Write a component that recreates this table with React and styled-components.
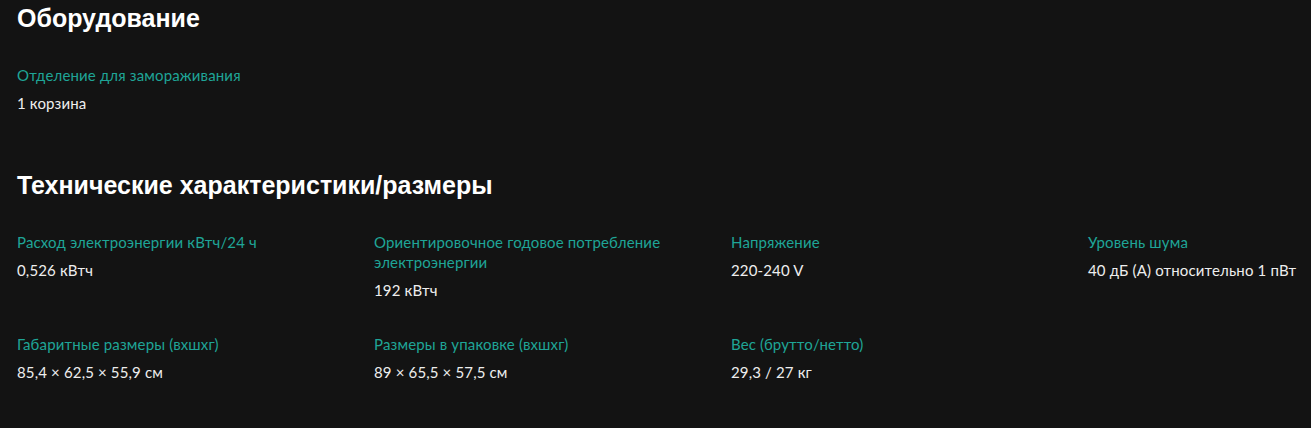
import styled, { createGlobalStyle } from "styled-components";

const GlobalStyle = createGlobalStyle`
  html, body {
    margin: 0;
    padding: 0;
    background: #131313;
    overflow: hidden;
  }
`;

const Page = styled.div`
  padding: 4px 0 20px 17px;
  color: #f2f2f2;
  font-family: "Lato", "Noto Sans", sans-serif;
`;

const Heading = styled.h2`
  margin: 0;
  font-family: "Liberation Sans", Arial, sans-serif;
  font-weight: 700;
  font-size: 25px;
  line-height: 29px;
  color: #ffffff;
`;

const Section = styled.section`
  margin-bottom: ${p => p.$gap || 0}px;
`;

const Grid = styled.div`
  display: grid;
  grid-template-columns: repeat(3, 337px) 1fr;
  column-gap: 20px;
  row-gap: 32px;
  margin-top: 32px;
`;

const Item = styled.div``;

const Label = styled.div`
  font-size: 15px;
  letter-spacing: 0.15px;
  line-height: 20px;
  color: #1fa597;
`;

const Value = styled.div`
  margin-top: 6px;
  font-size: 15px;
  letter-spacing: 0.15px;
  line-height: 24px;
  white-space: nowrap;
  color: #eeeeee;
`;

const equipment = [{ label: "Отделение для замораживания", value: "1 корзина" }];

const specs = [
  { label: "Расход электроэнергии кВтч/24 ч", value: "0,526 кВтч" },
  { label: "Ориентировочное годовое потребление электроэнергии", value: "192 кВтч" },
  { label: "Напряжение", value: "220-240 V" },
  { label: "Уровень шума", value: "40 дБ (A) относительно 1 пВт" },
  { label: "Габаритные размеры (вхшхг)", value: "85,4 × 62,5 × 55,9 см" },
  { label: "Размеры в упаковке (вхшхг)", value: "89 × 65,5 × 57,5 см" },
  { label: "Вес (брутто/нетто)", value: "29,3 / 27 кг" }
];

const App = () => {
  return (
    <>
      <GlobalStyle />
      <Page>
        <Section $gap={56}>
          <Heading>Оборудование</Heading>
          <Grid>
            {equipment.map(item => (
              <Item key={item.label}>
                <Label>{item.label}</Label>
                <Value>{item.value}</Value>
              </Item>
            ))}
          </Grid>
        </Section>
        <Section>
          <Heading>Технические характеристики/размеры</Heading>
          <Grid>
            {specs.map(item => (
              <Item key={item.label}>
                <Label>{item.label}</Label>
                <Value>{item.value}</Value>
              </Item>
            ))}
          </Grid>
        </Section>
      </Page>
    </>
  );
};

export default App;
